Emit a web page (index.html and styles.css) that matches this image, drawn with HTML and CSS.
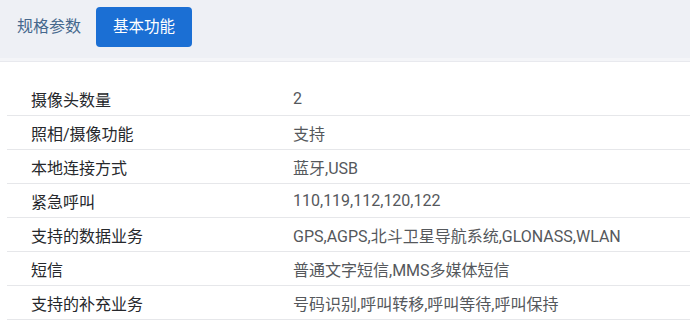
FILE: index.html
```html
<!DOCTYPE html>
<html lang="zh-CN">
<head>
<meta charset="utf-8">
<link rel="stylesheet" href="styles.css">
</head>
<body>
<div class="tabs">
  <span class="tab">规格参数</span>
  <span class="tab active">基本功能</span>
</div>
<div class="spec">
  <div class="row"><div class="label">摄像头数量</div><div class="value">2</div></div>
  <div class="row"><div class="label">照相/摄像功能</div><div class="value">支持</div></div>
  <div class="row"><div class="label">本地连接方式</div><div class="value">蓝牙,USB</div></div>
  <div class="row"><div class="label">紧急呼叫</div><div class="value">110,119,112,120,122</div></div>
  <div class="row"><div class="label">支持的数据业务</div><div class="value">GPS,AGPS,北斗卫星导航系统,GLONASS,WLAN</div></div>
  <div class="row"><div class="label">短信</div><div class="value">普通文字短信,MMS多媒体短信</div></div>
  <div class="row"><div class="label">支持的补充业务</div><div class="value">号码识别,呼叫转移,呼叫等待,呼叫保持</div></div>
</div>
</body>
</html>
```
FILE: styles.css
```css
html, body {
  margin: 0;
  padding: 0;
  background: #ffffff;
  font-family: "Roboto", "Noto Sans CJK SC", sans-serif;
  overflow: hidden;
}
.tabs {
  height: 51px;
  background: #eef0f5;
  display: flex;
  align-items: flex-start;
  padding: 7px 0 0 17px;
  gap: 15px;
  border-bottom: 3px solid #f4f5f8;
  box-shadow: 0 1px 0 #e8e9ee;
}
.tab {
  font-size: 16px;
  line-height: 40px;
  color: #46688d;
}
.tab.active {
  background: #1b6fd4;
  color: #ffffff;
  border-radius: 4px;
  height: 40px;
  padding: 0 17px;
  font-size: 15.5px;
}
.spec {
  margin: 21px 0 0 7px;
}
.row {
  display: grid;
  grid-template-columns: 286px 1fr;
  height: 33px;
  align-items: center;
  border-bottom: 1px solid #e6e7ea;
  font-size: 16px;
}
.label {
  padding-left: 24px;
  color: #26282c;
}
.value {
  color: #55585c;
}
```
